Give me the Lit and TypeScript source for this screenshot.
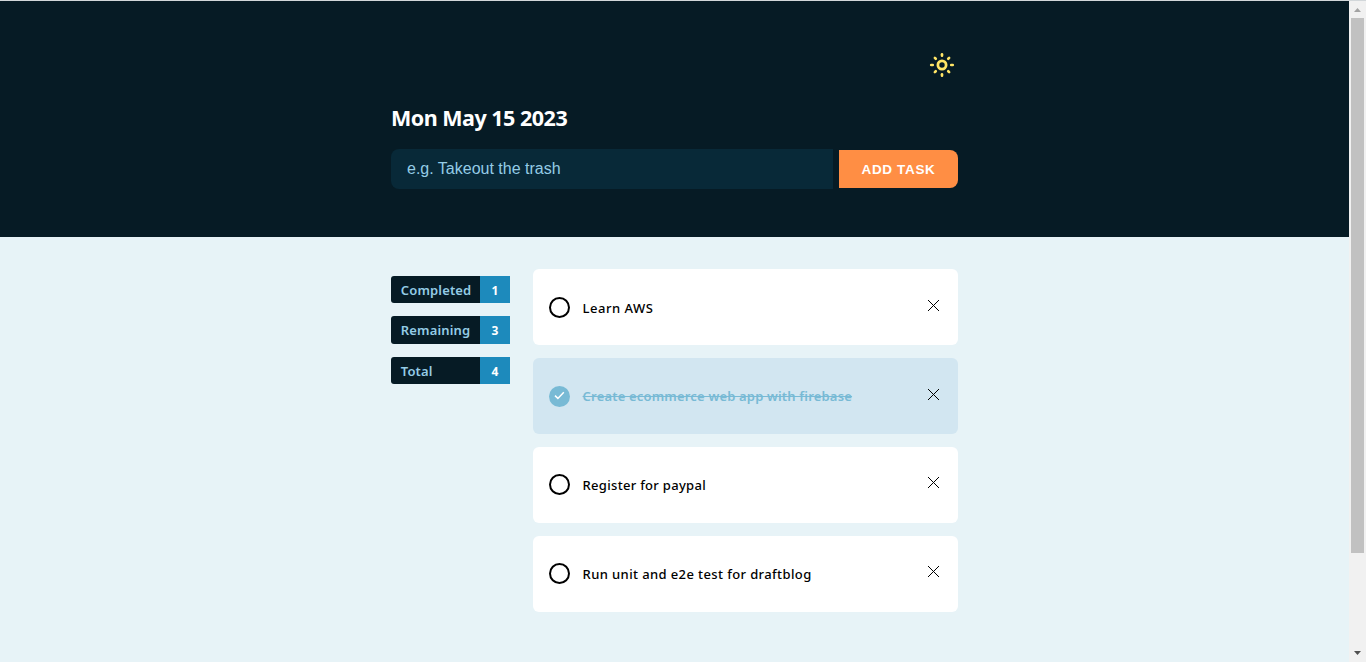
import { LitElement, html, css, svg } from "lit";
import { customElement, property, state } from "lit/decorators.js";
import { classMap } from "lit/directives/class-map.js";

interface Task {
  title: string;
  done: boolean;
  key: string;
}

@customElement("task-card")
class TaskCard extends LitElement {
  @property({ type: Boolean }) done = false;
  @property() label = "";
  @property() key = "";

  static styles = css`
    :host { display: block; }
    .card {
      box-sizing: border-box;
      height: 76px;
      border-radius: 6px;
      background: #fff;
      padding: 0 16px;
      display: flex;
      align-items: center;
      color: #000;
    }
    .done { background: #d2e6f1; }
    .mark { display: block; width: 21px; height: 21px; flex: none; }
    .title {
      flex: 1;
      margin-left: 12.6px;
      padding-top: 0.8px;
      font: 460 13px/20px "Noto Sans", "Open Sans", sans-serif;
      white-space: nowrap;
    }
    .text { display: inline-block; }
    .done .text { font-weight: 600; color: #78bad5; text-decoration: line-through; text-decoration-thickness: 1px; }
    .aws { letter-spacing: 0.5px; }
    .shop { letter-spacing: 0.18px; }
    .pay { letter-spacing: 0.3px; }
    .test { letter-spacing: 0.39px; }
    .close { display: block; width: 12px; height: 12px; margin: 0 3px 5px 0; flex: none; overflow: visible; }
  `;

  render() {
    return html`<div class=${classMap({ card: true, done: this.done })}>
      <svg class="mark" viewBox="0 0 21 21">
        ${this.done
          ? svg`<circle cx="10.5" cy="10.5" r="10.5" fill="#78bad5"/><path d="M6 9.6 8.9 12.4 14.8 6.2" fill="none" stroke="#fff" stroke-width="1.5"/>`
          : svg`<circle cx="10.5" cy="10.5" r="9.5" fill="none" stroke="#000" stroke-width="2"/>`}
      </svg>
      <div class="title"><span class="text ${this.key}">${this.label}</span></div>
      <svg class="close" viewBox="0 0 12 12"><path d="M1 1 12 12M12 1 1 12" fill="none" stroke="#000" stroke-width="1"/></svg>
    </div>`;
  }
}

@customElement("app-root")
class AppRoot extends LitElement {
  @state() tasks: Task[] = [
    { title: "Learn AWS", done: false, key: "aws" },
    { title: "Create ecommerce web app with firebase", done: true, key: "shop" },
    { title: "Register for paypal", done: false, key: "pay" },
    { title: "Run unit and e2e test for draftblog", done: false, key: "test" },
  ];

  static styles = css`
    :host {
      display: flex;
      box-sizing: border-box;
      height: 662px;
      overflow: hidden;
      border-top: 1px solid #d2d7da;
      background: #e7f3f7;
      font-family: "Noto Sans", "Open Sans", sans-serif;
    }
    .page { flex: 1; }
    .inner { width: 567px; margin-left: 391px; }
    header { background: #061b25; height: 236px; overflow: hidden; }
    .theme { display: flex; justify-content: flex-end; padding: 51px 3px 0 0; }
    .sun { display: block; width: 26px; height: 26px; }
    h1 {
      margin: 24px 0 0;
      font-size: 21.5px;
      line-height: 32px;
      font-weight: 700;
      color: #fff;
      letter-spacing: -0.5px;
      white-space: nowrap;
    }
    .form { display: flex; align-items: center; gap: 6px; margin-top: 15px; }
    input {
      box-sizing: border-box;
      width: 442px;
      height: 40px;
      border: 0;
      border-radius: 8px 0 0 8px;
      background: #082938;
      padding: 0 16px;
      font: 16px "Liberation Sans", Arial, sans-serif;
    }
    input::placeholder { color: #94cce6; opacity: 1; }
    button {
      width: 119px;
      height: 38px;
      border: 0;
      border-radius: 0 8px 8px 0;
      padding: 0;
      background: #ff8e44;
      color: #fff;
      font: 700 13.5px "Liberation Sans", Arial, sans-serif;
      letter-spacing: 0.65px;
      white-space: nowrap;
    }
    main { display: flex; justify-content: space-between; padding-top: 32.25px; }
    .stats { display: flex; flex-direction: column; gap: 13.2px; padding-top: 6.8px; width: 119px; }
    .stat { display: flex; height: 27.2px; border-radius: 3px 0 0 3px; overflow: hidden; font-size: 13px; line-height: 28px; font-weight: 600; letter-spacing: 0.15px; }
    .name { box-sizing: border-box; width: 89px; padding-left: 9.8px; background: #061b25; color: #94cce6; }
    .count { width: 30px; text-align: center; background: #1d8abc; color: #fff; font-size: 12px; line-height: 29px; font-weight: 700; }
    .list { width: 425px; display: flex; flex-direction: column; gap: 12.8px; }
    .scrollbar { width: 17px; background: #f1f1f1; display: flex; flex-direction: column; align-items: center; }
    .arrow { display: block; width: 17px; height: 17px; }
    .track { flex: 1; width: 13px; }
    .thumb { height: 535px; background: #c1c1c1; }
  `;

  private sun() {
    const rays = [0, 45, 90, 135, 180, 225, 270, 315];
    return html`<svg class="sun" viewBox="0 0 26 26" fill="none" stroke="#ffe566">
      <circle cx="13" cy="13" r="4.1" stroke-width="2.8"/>
      ${rays.map((a) => svg`<path d=${a % 90 ? "M13 4.2V2.9" : "M13 3.8V2.2"} stroke-width="2.6" stroke-linecap="round" transform="rotate(${a} 13 13)"/>`)}
    </svg>`;
  }

  render() {
    const done = this.tasks.filter((t) => t.done).length;
    const stats: [string, number][] = [
      ["Completed", done],
      ["Remaining", this.tasks.length - done],
      ["Total", this.tasks.length],
    ];
    return html`
      <div class="page">
        <header>
          <div class="inner">
            <div class="theme">${this.sun()}</div>
            <h1>Mon May 15 2023</h1>
            <div class="form">
              <input placeholder="e.g. Takeout the trash" />
              <button>ADD TASK</button>
            </div>
          </div>
        </header>
        <main class="inner">
          <div class="stats">
            ${stats.map(([n, c]) => html`<div class="stat"><span class="name">${n}</span><span class="count">${c}</span></div>`)}
          </div>
          <div class="list">
            ${this.tasks.map((t) => html`<task-card .label=${t.title} .done=${t.done} .key=${t.key}></task-card>`)}
          </div>
        </main>
      </div>
      <div class="scrollbar">
        <svg class="arrow" viewBox="0 0 17 17"><path d="M5 11 8.5 7 12 11Z" fill="#a3a3a3"/></svg>
        <div class="track"><div class="thumb"></div></div>
        <svg class="arrow" viewBox="0 0 17 17"><path d="M5 6 8.5 10 12 6Z" fill="#505050"/></svg>
      </div>`;
  }
}
